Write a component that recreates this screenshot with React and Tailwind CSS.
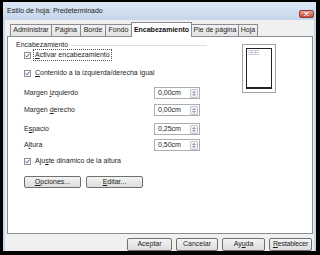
import React from 'react';

const U = ({ children }) => <span className="underline decoration-[0.5px] underline-offset-[1px]">{children}</span>;

const Check = () => (
    <div className="w-[7px] h-[7px] border border-[#8e8f8f] bg-white flex items-center justify-center shrink-0">
        <svg width="5" height="5" viewBox="0 0 5 5">
            <path d="M0.6 2.6 L1.9 3.9 L4.4 0.8" fill="none" stroke="#3b5698" strokeWidth="1" />
        </svg>
    </div>
);

const Spin = () => (
    <div className="ml-auto mr-[1px] w-[8px] h-[9px] border border-[#c5c5c5] rounded-[1px] bg-[#f3f3f3] flex flex-col items-center justify-center gap-[1px]">
        <svg width="4" height="2" viewBox="0 0 4 2"><path d="M0 2 L2 0 L4 2 Z" fill="#8a9ab0" /></svg>
        <svg width="4" height="2" viewBox="0 0 4 2"><path d="M0 0 L2 2 L4 0 Z" fill="#8a9ab0" /></svg>
    </div>
);

const Field = ({ label, value, className }) => (
    <div className={`flex items-center h-[12px] pl-[8px] ${className}`}>
        <span className="w-[130px]">{label}</span>
        <div className="w-[46px] h-[12px] border border-[#abadb3] bg-white flex items-center pl-[3px]">
            <span>{value}</span>
            <Spin />
        </div>
    </div>
);

const Button = ({ children, className }) => (
    <div className={`border border-[#707070] rounded-[2px] bg-gradient-to-b from-[#f4f4f4] to-[#dcdcdc] flex items-center justify-center ${className}`}>
        {children}
    </div>
);

const tabs = [
    { name: 'Administrar', w: 'w-[42px]' },
    { name: 'Página', w: 'w-[30px]' },
    { name: 'Borde', w: 'w-[26px]' },
    { name: 'Fondo', w: 'w-[27px]' },
    { name: 'Encabezamiento', w: 'w-[61px]', active: true },
    { name: 'Pie de página', w: 'w-[48px]' },
    { name: 'Hoja', w: 'w-[20px]' },
];

export default function App() {
    return (
        <div className="w-[320px] h-[255px] bg-black pt-[2px] pl-[3px] pr-[4px] pb-[4px] font-['Liberation_Sans',Arial,sans-serif] text-[7px] text-[#1e1e1e]">
            <div className="flex h-full flex-col bg-[#c6d7ec]">
                {/* Title bar */}
                <div className="h-[18px] flex items-center pl-[4px] bg-gradient-to-b from-[#dbe6f4] to-[#c6d7ec]">
                    <span className="text-[7px] text-[#222]">Estilo de hoja: Predeterminado</span>
                    <div className="ml-auto mr-[2px] mt-[5px] w-[15px] h-[8px] rounded-[2px] border border-[#8d3a3a] bg-gradient-to-b from-[#e8a393] to-[#c4463a] flex items-center justify-center">
                        <svg width="5" height="4" viewBox="0 0 5 4">
                            <path d="M0.5 0.3 L4.5 3.7 M4.5 0.3 L0.5 3.7" stroke="white" strokeWidth="1.1" />
                        </svg>
                    </div>
                </div>

                {/* Body */}
                <div className="flex-1 mx-[2px] bg-[#f0f0f0] pl-[2px] pr-[1px] pt-[2px] flex flex-col">
                    <div className="flex items-end h-[14px] pl-[3px]">
                        {tabs.map((t) =>
                            t.active ? (
                                <div key={t.name} className={`${t.w} h-[15px] -mb-px -ml-px relative z-10 bg-white border border-b-0 border-[#898c95] flex items-center justify-center font-bold text-[#111]`}>
                                    {t.name}
                                </div>
                            ) : (
                                <div key={t.name} className={`${t.w} h-[12px] -ml-px first:ml-0 border border-b-0 border-[#898c95] bg-gradient-to-b from-[#f2f2f2] to-[#e3e3e3] flex items-center justify-center`}>
                                    {t.name}
                                </div>
                            )
                        )}
                    </div>

                    {/* Panel */}
                    <div className="h-[198px] bg-white border border-[#898c95] pt-[3px] pl-[8px] flex">
                        <div className="w-[191px] flex flex-col">
                            <div className="h-[10px] flex items-center">
                                <span>Encabezamiento</span>
                                <div className="flex-1 ml-[3px] border-t border-[#d5dfe5]" />
                            </div>
                            <div className="h-[10px] flex items-center pl-[8px]">
                                <Check />
                                <span className="ml-[3px] px-[1px] outline outline-1 outline-dotted outline-[#555]"><U>A</U>ctivar encabezamiento</span>
                            </div>
                            <div className="h-[10px] mt-[8px] flex items-center pl-[8px]">
                                <Check />
                                <span className="ml-[4px]"><U>C</U>ontenido a la izquierda/derecha igual</span>
                            </div>
                            <Field className="mt-[9px]" label={<>Margen <U>i</U>zquierdo</>} value="0,00cm" />
                            <Field className="mt-[5px]" label={<>Margen <U>d</U>erecho</>} value="0,00cm" />
                            <Field className="mt-[7px]" label={<>E<U>s</U>pacio</>} value="0,25cm" />
                            <Field className="mt-[4px]" label={<>A<U>l</U>tura</>} value="0,50cm" />
                            <div className="h-[10px] mt-[5px] flex items-center pl-[8px]">
                                <Check />
                                <span className="ml-[4px]">Aju<U>s</U>te dinámico de la altura</span>
                            </div>
                            <div className="flex mt-[10px] pl-[8px] gap-[5px]">
                                <Button className="w-[57px] h-[12px]"><U>O</U>pciones...</Button>
                                <Button className="w-[57px] h-[12px]"><U>E</U>ditar...</Button>
                            </div>
                        </div>
                        {/* Preview */}
                        <div className="ml-[35px] mt-[4px] w-[34px] h-[49px] border border-[#a3a3a3] bg-white p-[3px]">
                            <div className="h-full border border-[#222] border-b-2 border-r-[1.5px] bg-white pl-[1px] pt-[1px]">
                                <svg width="11" height="5" viewBox="0 0 11 5">
                                    <path d="M0 0.5 H11 M0 2.5 H11 M0 4.5 H11 M3.5 0 V5 M7.5 0 V5" stroke="#c9cde0" strokeWidth="1" />
                                </svg>
                            </div>
                        </div>
                    </div>

                    {/* Bottom buttons */}
                    <div className="flex justify-end gap-[4px] mt-[4px] pr-[1px]">
                        <Button className="w-[45px] h-[13px] border-[#3c7fb1] from-[#eaf6fd] to-[#bee6fd]">Aceptar</Button>
                        <Button className="w-[42px] h-[13px]">Cancelar</Button>
                        <Button className="w-[43px] h-[13px]">Ay<U>u</U>da</Button>
                        <Button className="w-[43px] h-[13px] tracking-[-0.2px]"><U>R</U>establecer</Button>
                    </div>
                </div>
            </div>
        </div>
    );
}
